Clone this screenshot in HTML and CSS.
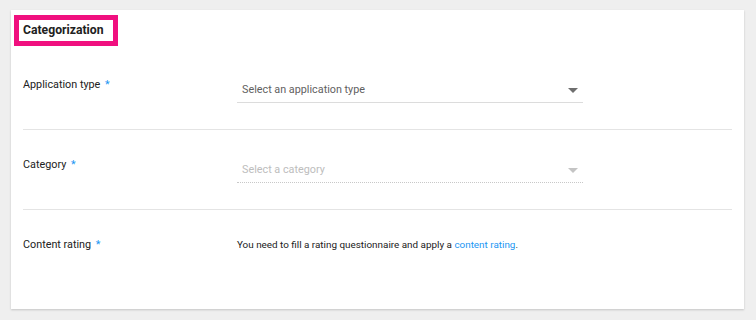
FILE: index.html
```html
<!DOCTYPE html>
<html lang="en">
<head>
  <meta charset="UTF-8" />
  <title>Categorization</title>
  <link rel="stylesheet" href="styles.css">
</head>
<body>
  <div class="card">
    <div class="card-header">
      <h2 class="card-title">Categorization</h2>
    </div>

    <div class="row">
      <div class="row-label">Application type <span class="req">*</span></div>
      <div class="row-value">
        <div class="select">
          <span>Select an application type</span>
          <span class="arrow"></span>
        </div>
      </div>
    </div>

    <div class="row">
      <div class="row-label">Category <span class="req">*</span></div>
      <div class="row-value">
        <div class="select disabled">
          <span>Select a category</span>
          <span class="arrow"></span>
        </div>
      </div>
    </div>

    <div class="row last">
      <div class="row-label">Content rating <span class="req">*</span></div>
      <div class="row-value text">
        You need to fill a rating questionnaire and apply a <a href="#">content rating</a>.
      </div>
    </div>
  </div>
</body>
</html>
```

FILE: styles.css
```css
body {
  margin: 0;
  background-color: #efefef;
  font-family: Roboto, "Liberation Sans", sans-serif;
  color: #212121;
  height: 320px;
  padding: 10px 12px 0 11px;
  box-sizing: border-box;
}
.card {
  background-color: #fff;
  padding: 0 12px;
  height: 299px;
  box-sizing: border-box;
  box-shadow: 0 1px 2px rgba(0, 0, 0, 0.18);
}
.card-header {
  padding: 5px 0 4px;
}
.card-title {
  display: inline-block;
  margin: 0 0 0 -9px;
  padding: 3px 9px 3px 4px;
  border: 5px solid #f0107f;
  font-size: 12.2px;
  line-height: 15px;
  font-weight: 700;
}
.row {
  display: flex;
  height: 80px;
  box-sizing: border-box;
  border-bottom: 1px solid #e4e4e4;
}
.row.last {
  border-bottom: none;
}
.row-label {
  width: 214px;
  padding-top: 27px;
  font-size: 10.8px;
  line-height: 16px;
}
.req {
  color: #2196f3;
  margin-left: 2px;
}
.row-value {
  padding-top: 30px;
}
.row-value.text {
  padding-top: 27px;
  font-size: 9.9px;
  line-height: 16px;
}
.row-value a {
  color: #2196f3;
  text-decoration: none;
}
.select {
  width: 346px;
  display: flex;
  align-items: center;
  justify-content: space-between;
  padding: 0 5px 2px 5px;
  box-sizing: border-box;
  line-height: 20px;
  font-size: 10.8px;
  color: #5f5f5f;
  border-bottom: 1px solid #dcdcdc;
}
.select.disabled {
  color: #bdbdbd;
  border-bottom: 1px dotted #c8c8c8;
}
.arrow {
  width: 0;
  height: 0;
  border-left: 5px solid transparent;
  border-right: 5px solid transparent;
  border-top: 5px solid #6e6e6e;
}
.select.disabled .arrow {
  border-top-color: #c4c4c4;
}
```
